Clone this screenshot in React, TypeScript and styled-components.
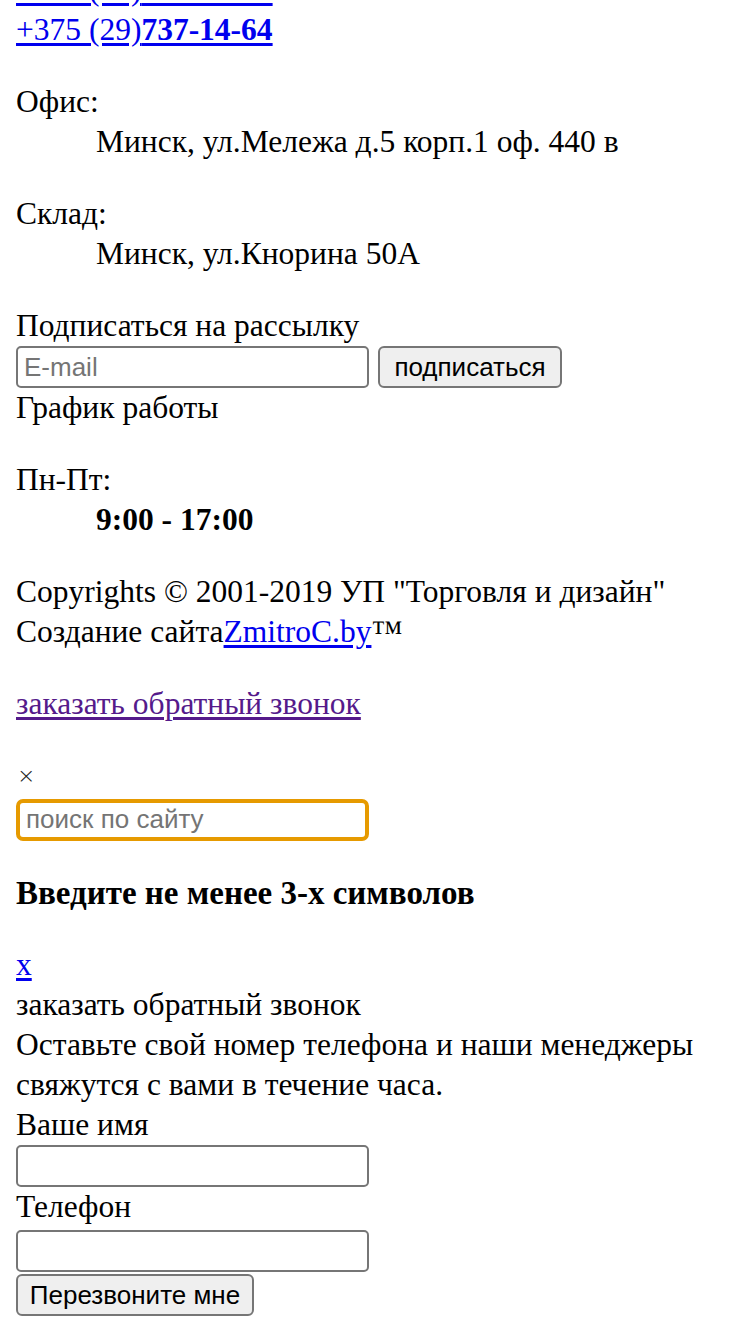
import React from "react";
import styled, { createGlobalStyle } from "styled-components";

const GlobalStyle = createGlobalStyle`
  html, body {
    background: #fff;
  }
  body {
    margin: 0 16px;
    font-family: "Liberation Serif", "Times New Roman", serif;
    font-size: 31.5px;
    line-height: 40px;
    color: #000;
  }
`;

const Page = styled.div`
  display: flex;
  flex-direction: column;
  overflow: hidden;
`;

const Phones = styled.div`
  margin-top: -30px;
`;

const Line = styled.div`
  height: 40px;
  white-space: nowrap;
`;

const Link = styled.a<{ $visited?: boolean }>`
  color: ${(p) => (p.$visited ? "#551a8b" : "#0000ee")};
  text-decoration: underline;
  text-underline-offset: 3px;
`;

const Strong = styled.b`
  font-weight: 700;
`;

const Info = styled.dl<{ $top?: number }>`
  margin: ${(p) => p.$top ?? 0}px 0 32px;
`;

const Term = styled.dt`
  height: 40px;
`;

const Desc = styled.dd<{ $bold?: boolean }>`
  margin: 0 0 0 80px;
  height: 40px;
  font-weight: ${(p) => (p.$bold ? 700 : 400)};
`;

const FormRow = styled.form`
  display: flex;
  gap: 9px;
  margin: 0;
`;

const TextInput = styled.input<{ $focus?: boolean }>`
  box-sizing: border-box;
  width: 353px;
  height: 42px;
  padding: 0 6px;
  border: ${(p) => (p.$focus ? "4px solid #e69a00" : "2px solid #767676")};
  border-radius: ${(p) => (p.$focus ? "7px" : "5px")};
  font-family: "Liberation Sans", Arial, sans-serif;
  font-size: 26px;
  color: #000;
  background: #fff;
  outline: none;
  &::placeholder {
    color: #757575;
  }
`;

const Button = styled.button<{ $w: number }>`
  box-sizing: border-box;
  width: ${(p) => p.$w}px;
  height: 42px;
  padding: 0;
  border: 2px solid #767676;
  border-radius: 6px;
  background: #efefef;
  font-family: "Liberation Sans", Arial, sans-serif;
  font-size: 26px;
  color: #000;
`;

const Section = styled.div`
  margin-bottom: 32px;
`;

const Close = styled.div`
  height: 40px;
  display: flex;
  align-items: center;
  padding-left: 1px;
  font-family: "DejaVu Sans", sans-serif;
  font-size: 22px;
  font-weight: 200;
  color: #222;
`;

const Field = styled.div<{ $gap?: number }>`
  margin-top: ${(p) => p.$gap ?? 2}px;
`;

const Heading = styled.h4`
  margin: 32px 0;
  font-size: 33px;
  line-height: 40px;
  font-weight: 700;
`;

const Modal = styled.div`
  display: flex;
  flex-direction: column;
`;

export default function App() {
  return (
    <>
      <GlobalStyle />
      <Page>
        <Section>
          <Phones>
            <Line>
              <Link href="#">
                +375 (44)<Strong>737-14-64</Strong>
              </Link>
            </Line>
            <Line>
              <Link href="#">
                +375 (29)<Strong>737-14-64</Strong>
              </Link>
            </Line>
          </Phones>
        </Section>

        <Info>
          <Term>Офис:</Term>
          <Desc>Минск, ул.Мележа д.5 корп.1 оф. 440 в</Desc>
        </Info>
        <Info>
          <Term>Склад:</Term>
          <Desc>Минск, ул.Кнорина 50А</Desc>
        </Info>

        <div>
          <Line>Подписаться на рассылку</Line>
          <FormRow onSubmit={(e) => e.preventDefault()}>
            <TextInput type="email" placeholder="E-mail" />
            <Button type="submit" $w={184}>
              подписаться
            </Button>
          </FormRow>
          <Line>График работы</Line>
        </div>

        <Info $top={32}>
          <Term>Пн-Пт:</Term>
          <Desc $bold>9:00 - 17:00</Desc>
        </Info>

        <Section>
          <Line>Copyrights © 2001-2019 УП "Торговля и дизайн"</Line>
          <Line>
            Создание сайта<Link href="#">ZmitroC.by</Link>™
          </Line>
        </Section>

        <Section>
          <Line>
            <Link href="#" $visited>
              заказать обратный звонок
            </Link>
          </Line>
        </Section>

        <Close>×</Close>
        <Field>
          <TextInput type="text" placeholder="поиск по сайту" $focus />
        </Field>
        <Heading>Введите не менее 3-х символов</Heading>

        <Modal>
          <Line>
            <Link href="#">x</Link>
          </Line>
          <Line>заказать обратный звонок</Line>
          <Line>Оставьте свой номер телефона и наши менеджеры</Line>
          <Line>свяжутся с вами в течение часа.</Line>
          <Line>Ваше имя</Line>
          <Field $gap={0}>
            <TextInput type="text" />
          </Field>
          <Line>Телефон</Line>
          <Field>
            <TextInput type="tel" />
          </Field>
          <Field>
            <Button type="button" $w={238}>
              Перезвоните мне
            </Button>
          </Field>
        </Modal>
      </Page>
    </>
  );
}
